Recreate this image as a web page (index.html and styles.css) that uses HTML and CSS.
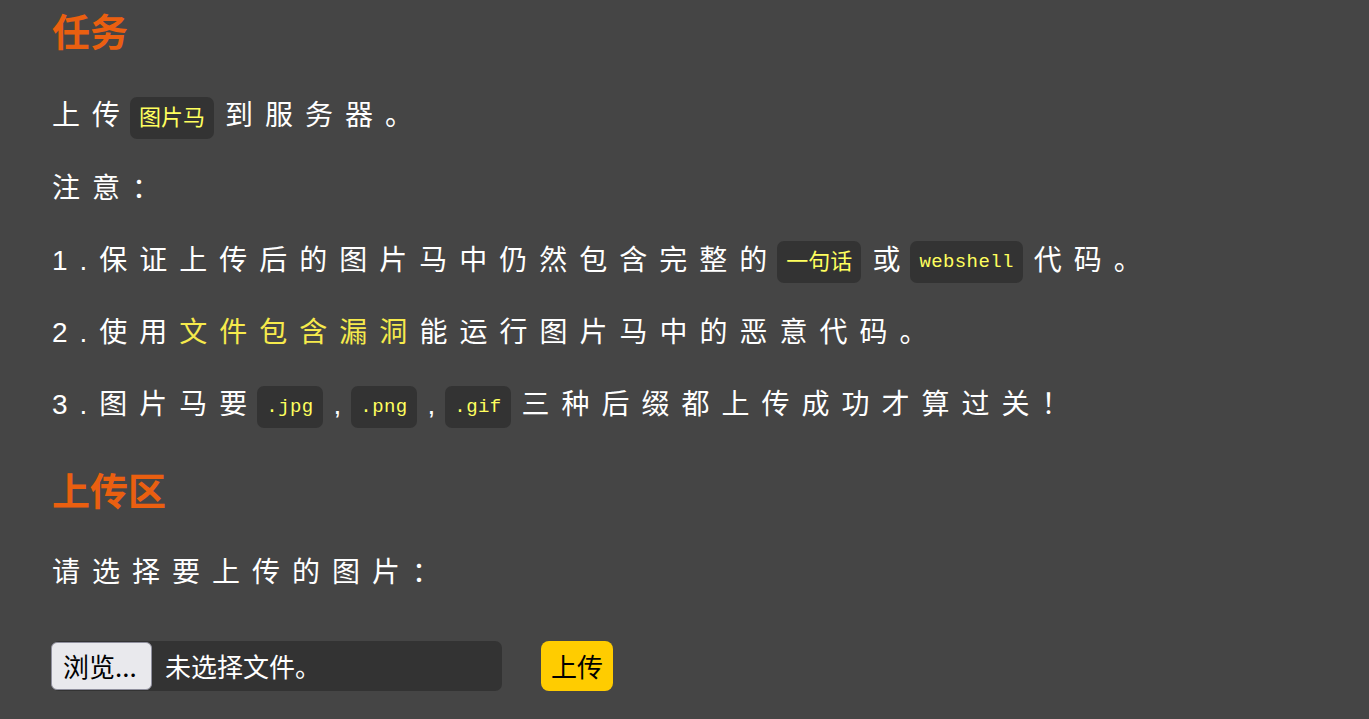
FILE: index.html
```html
<!DOCTYPE html>
<html lang="zh-CN">
<head>
<meta charset="utf-8">
<title>Upload</title>
<link rel="stylesheet" href="styles.css">
</head>
<body>
<div class="content">
  <h2 class="title first">任务</h2>
  <p class="line">上传<code class="cjk">图片马</code>到服务器。</p>
  <p class="line">注意：</p>
  <p class="line">1.保证上传后的图片马中仍然包含完整的<code class="cjk">一句话</code>或<code class="mono">webshell</code>代码。</p>
  <p class="line">2.使用<span class="hl">文件包含漏洞</span>能运行图片马中的恶意代码。</p>
  <p class="line">3.图片马要<code class="mono">.jpg</code>,<code class="mono">.png</code>,<code class="mono">.gif</code>三种后缀都上传成功才算过关！</p>
  <h2 class="title second">上传区</h2>
  <p class="line last">请选择要上传的图片：</p>
  <form class="upload-row">
    <div class="file">
      <span class="browse">浏览...</span>
      <span class="file-name">未选择文件。</span>
    </div>
    <button type="button" class="submit">上传</button>
  </form>
</div>
</body>
</html>
```

FILE: styles.css
```css
html, body {
  margin: 0;
  padding: 0;
  background: #454545;
}

body {
  font-family: "Liberation Sans", "Noto Sans CJK SC", sans-serif;
  color: #ffffff;
}

.content {
  padding: 0 52px;
}

.title {
  margin: 0;
  font-size: 38px;
  line-height: 48px;
  font-weight: bold;
  color: #ea5f10;
  font-family: "Noto Sans CJK SC", "Liberation Sans", sans-serif;
}

.title.first {
  padding-top: 6px;
  margin-bottom: 40px;
}

.title.second {
  margin-top: 37px;
  margin-bottom: 38px;
}

.line {
  margin: 0 0 28px 0;
  font-size: 28px;
  line-height: 44px;
  letter-spacing: 12px;
  white-space: nowrap;
}

.line.last {
  margin-bottom: 46px;
}

.hl {
  color: #f6ea4c;
}

code {
  display: inline-block;
  vertical-align: middle;
  margin: 0 11px 0 -2px;
  padding: 8px 9px;
  line-height: 26px;
  background: #333333;
  color: #ffff5e;
  border-radius: 7px;
  letter-spacing: 0;
}

code.cjk {
  font-family: "Noto Sans CJK SC", sans-serif;
  font-size: 22px;
  padding-top: 5px;
  padding-bottom: 11px;
}

code.mono {
  font-family: "Liberation Mono", monospace;
  font-size: 19px;
  letter-spacing: 0.4px;
}

.upload-row {
  display: flex;
  align-items: center;
  gap: 39px;
  margin: 0;
}

.file {
  display: flex;
  align-items: center;
  width: 450px;
  height: 50px;
  background: #333333;
  border-radius: 7px;
}

.browse {
  box-sizing: border-box;
  display: flex;
  align-items: center;
  width: 101px;
  height: 48px;
  padding: 0 0 0 11px;
  margin-left: -1px;
  background: #e9e9ed;
  color: #000;
  border: 1px solid #8f8f9d;
  border-radius: 6px;
  font-size: 26px;
  font-family: "Noto Sans CJK SC", sans-serif;
}

.file-name {
  margin-left: 13px;
  font-size: 26px;
  font-family: "Noto Sans CJK SC", sans-serif;
  color: #fff;
}

.submit {
  height: 50px;
  width: 72px;
  padding: 0;
  border: none;
  border-radius: 8px;
  background: #ffcc00;
  color: #000;
  font-size: 26px;
  font-family: "Noto Sans CJK SC", sans-serif;
}
```
